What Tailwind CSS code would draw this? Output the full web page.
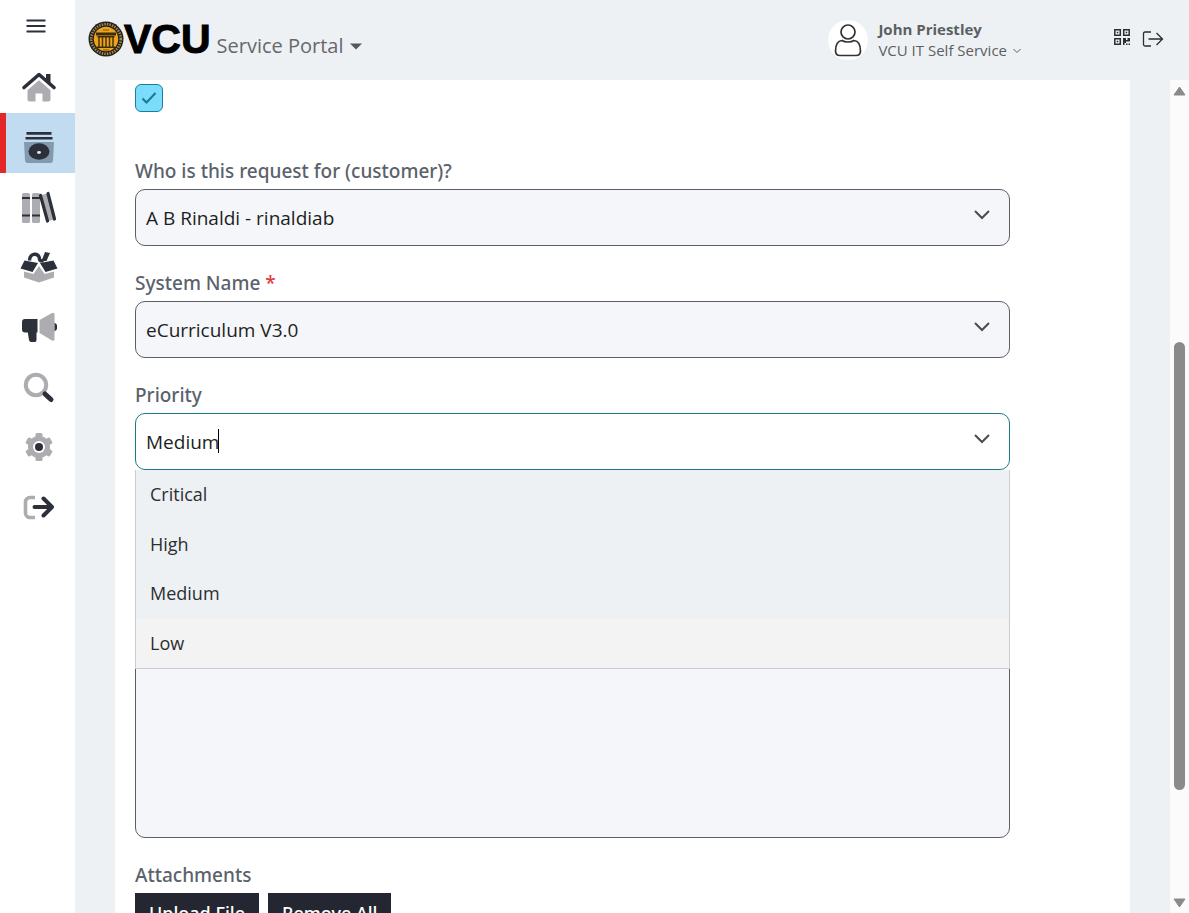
<!DOCTYPE html>
<html lang="en">
<head>
<meta charset="utf-8">
<meta name="viewport" content="width=device-width, initial-scale=1">
<title>VCU Service Portal</title>
<script src="https://cdn.jsdelivr.net/npm/@tailwindcss/browser@4"></script>
</head>
<body class="flex h-screen overflow-hidden bg-[#edf1f4] font-['Open_Sans','Noto_Sans',sans-serif] text-[#24262b]">

<nav aria-label="Main" class="flex w-[75px] shrink-0 flex-col bg-white">
  <button type="button" aria-label="Menu" class="flex h-[53px] items-center justify-center pr-[3px] pb-px">
    <svg width="20" height="14" viewBox="0 0 20 14" stroke="#2b303b" stroke-width="2"><path d="M.5 1.5h19M.5 7h19M.5 12.5h19"/></svg>
  </button>
  <a href="#" aria-label="Home" class="flex h-[60px] items-center justify-center pt-2 pl-[2px]">
    <svg width="36" height="36" viewBox="0 0 36 36"><path d="M18 9.500 6.500 19v11.500a2 2 0 0 0 2 2h6v-8h7v8h6a2 2 0 0 0 2-2V19z" fill="#adadb1"/><path d="m3 19.500 15-13 15 13" fill="none" stroke="#fff" stroke-width="7" stroke-linejoin="round"/><path d="M25 5h4.500v11.500L25 12z" fill="#2b303b"/><path d="m3 18.500 15-13 15 13" fill="none" stroke="#2b303b" stroke-width="3.600" stroke-linecap="round" stroke-linejoin="round"/></svg>
  </a>
  <a href="#" aria-label="Services" aria-current="page" class="flex h-[60px] items-center justify-center border-l-[6px] border-[#e22726] bg-[#c1dbf0] pt-2 pr-1">
    <svg width="32" height="36" viewBox="0 0 32 36"><path d="M3.500 3h25v2.700h-25zM2.500 8h27v2.500h-27z" fill="#2b303b"/><path d="M1 13h30l-1 18a3 3 0 0 1-3 3H5a3 3 0 0 1-3-3z" fill="#8499ad"/><ellipse cx="16" cy="22.500" rx="10.500" ry="8.200" fill="#2b303b"/><ellipse cx="16" cy="23.500" rx="2" ry="1.400" fill="#dbe8f2"/></svg>
  </a>
  <a href="#" aria-label="Knowledge base" class="flex h-[60px] items-center justify-center pt-[10px] pl-[2px]">
    <svg width="36" height="34" viewBox="0 0 36 34"><g fill="#adadb1"><rect x="1" y="2" width="8" height="30" rx="1.500"/><rect x="11" y="2" width="8" height="30" rx="1.500"/></g><path d="M1 6h8v2H1zM11 6h8v2h-8zM1 23.500h8v2H1zM11 23.500h8v2h-8z" fill="#2b303b"/><path d="m20.500 4 6-1.500 7 26-6 1.500z" fill="#adadb1"/><path d="m19.500 4.500 7 25.500M27 2.500 33.500 28" stroke="#2b303b" stroke-width="3.200" stroke-linecap="round"/></svg>
  </a>
  <a href="#" aria-label="My items" class="flex h-[60px] items-center justify-center pt-2 pl-[2px]">
    <svg width="38" height="34" viewBox="0 0 38 34"><path d="M4 21.500 13.500 24l5.500-8 5.500 8 9.500-2.500v6L19 32.500 4 27.500z" fill="#adadb1"/><path d="M4.500 10.500 18 13l-5.500 9L.5 18.500zM33.500 10.500 20 13l5.500 9 12-3.500z" fill="#2b303b"/><path d="M9.500 10.500c0-8 10-8 10-1.500 0 2 1.500 2 4 1.500" fill="none" stroke="#2b303b" stroke-width="3.500"/><path d="m25 2 5 1-3.500 8h-5z" fill="#2b303b"/></svg>
  </a>
  <a href="#" aria-label="News" class="flex h-[60px] items-center justify-center pt-[10px] pl-[2px]">
    <svg width="36" height="34" viewBox="0 0 36 34"><path d="M4 8h12.500v13.500h-1V29q0 2-1.500 2h-4q-1.500 0-2-2l-1.200-7.500H4a3 3 0 0 1-3-3V11a3 3 0 0 1 3-3z" fill="#2b303b"/><path d="M34 13c2 1 2 5 0 6z" stroke="#2b303b" stroke-width="1.500" fill="#2b303b"/><path d="M18.500 9 31 2q2.500-1 2.500 1.500v24.500q0 2.500-2.500 1.500L18.500 22z" fill="#adadb1"/></svg>
  </a>
  <a href="#" aria-label="Search" class="flex h-[60px] items-center justify-center pt-[10px] pl-[2px]">
    <svg width="32" height="32" viewBox="0 0 32 32" fill="none"><circle cx="13" cy="13" r="10.200" stroke="#adadb1" stroke-width="4"/><path d="m22 22 6 5.500" stroke="#2b303b" stroke-width="5" stroke-linecap="round"/></svg>
  </a>
  <a href="#" aria-label="Settings" class="flex h-[60px] items-center justify-center pt-2 pl-[2px]">
    <svg width="30" height="30" viewBox="0 0 30 30"><g fill="#adadb1"><circle cx="15" cy="15" r="11"/><rect x="11.500" y="1" width="7" height="28" rx="1.500"/><rect x="11.500" y="1" width="7" height="28" rx="1.500" transform="rotate(60 15 15)"/><rect x="11.500" y="1" width="7" height="28" rx="1.500" transform="rotate(120 15 15)"/></g><circle cx="15" cy="15" r="6" fill="#fff"/><circle cx="15" cy="15" r="4" fill="#2b303b"/></svg>
  </a>
  <a href="#" aria-label="Sign out" class="flex h-[60px] items-center justify-center pt-2 pl-[2px]">
    <svg width="32" height="26" viewBox="0 0 32 26" fill="none" stroke-linejoin="round"><path d="M12 3.500H7A4.500 4.500 0 0 0 2.500 8v11A4.500 4.500 0 0 0 7 23.500h5" stroke="#adadb1" stroke-width="3.600"/><path d="M11.500 13H29M20.500 4.500 29 13l-8.500 8.500" stroke="#2b303b" stroke-width="4" stroke-linecap="round"/></svg>
  </a>
</nav>

<div class="flex min-w-0 flex-1 flex-col">
  <header class="flex h-20 shrink-0 items-center pl-[13px] pr-[25px]">
    <div class="flex flex-1 items-center">
      <svg class="mb-[2px]" width="36" height="36" viewBox="0 0 36 36" aria-hidden="true"><circle cx="18" cy="18" r="17.500" fill="#24221c"/><circle cx="18" cy="18" r="14.800" fill="none" stroke="#a58c52" stroke-width="2.600" stroke-dasharray="1.400 1.200"/><circle cx="18" cy="18" r="12.200" fill="#eda41c"/><path d="M8 11.500h20v3H8zM9.500 15h17v1.500h-17zM9 25.500h18V27H9z" fill="#3b2b0c"/><path d="M11 16v10M14.500 16v10M18 16v10M21.500 16v10M25 16v10" stroke="#4a340b" stroke-width="1.500"/><path d="M15 9h6M15 29h6" stroke="#7a5710"/></svg>
      <span class="mb-[2px] font-['Liberation_Sans',Arial,sans-serif] text-[41px] leading-[42px] font-bold text-black [-webkit-text-stroke:1px_#000]">VCU</span>
      <button type="button" class="mt-3 ml-[6px] flex items-center gap-[6px] text-[20px] leading-7 text-[#66686c]">Service Portal
        <svg width="12" height="7" viewBox="0 0 12 7"><path d="M0 .5h12L6 6.500z" fill="#55575b"/></svg>
      </button>
    </div>
    <button type="button" class="mr-[93px] flex items-center gap-[10px] text-left text-[#5c5f63]">
      <span class="flex size-10 items-center justify-center rounded-full bg-white">
        <svg width="28" height="34" viewBox="0 0 28 34" fill="none" stroke="#303236" stroke-width="1.700"><circle cx="14" cy="9" r="7"/><path d="M8 17.500C4 18 1.500 22 1.500 28q0 4.500 4.500 4.500h16q4.500 0 4.500-4.500C26.500 22 24 18 20 17.500q-2 1.500-6 1.500t-6-1.500z"/></svg>
      </span>
      <span class="flex flex-col">
        <span class="text-[15px] leading-[21px] font-bold">John Priestley</span>
        <span class="flex items-center gap-[6px] text-[15px] leading-[21px]">VCU IT Self Service
          <svg width="8" height="6" viewBox="0 0 8 6" fill="none" stroke="#5c5f63"><path d="m.5 1 3.500 3.500L7.500 1"/></svg>
        </span>
      </span>
    </button>
    <button type="button" aria-label="QR code" class="mb-[6px]">
      <svg width="16" height="16" viewBox="0 0 16 16"><g fill="none" stroke="#2b2d31" stroke-width="1.500"><path d="M.8.800h5.500v5.500H.8zM9.700.800h5.500v5.500H9.700zM.8 9.700h5.500v5.500H.8z"/></g><path d="M2.800 2.800h1.500v1.500H2.800zM11.700 2.800h1.500v1.500h-1.500zM2.800 11.700h1.500v1.500H2.800zM9 9h3v2h1.500V9H16v3.500h-4V14h-1.500v2H9zM12 14.500h1.500V16H12zM14.500 14.500H16V16h-1.500z" fill="#2b2d31"/></svg>
    </button>
    <button type="button" aria-label="Log out" class="mb-[2px] ml-[12px]">
      <svg width="22" height="16" viewBox="0 0 22 16" fill="none" stroke="#2b2d31" stroke-width="1.300"><path d="M9 1H3Q1.500 1 1.500 2.500v11Q1.500 15 3 15h6M6.500 8H20.500M14.500 2l6 6-6 6"/></svg>
    </button>
  </header>

  <div class="flex min-h-0 flex-1">
    <main class="mx-10 min-w-0 flex-1 overflow-hidden bg-white pt-1 pr-[120px] pl-5">
      <form>
        <label class="relative flex size-7">
          <input type="checkbox" checked aria-label="Confirm" class="size-7 appearance-none rounded-[6px] border border-[#1d7f96] bg-[#7bdcfc]">
          <svg class="pointer-events-none absolute inset-0 m-auto" width="16" height="14" viewBox="0 0 16 14" fill="none" stroke="#177a94" stroke-width="2"><path d="m1.500 7.500 4 4L14.500 2"/></svg>
        </label>

        <div class="mt-[47px] flex flex-col gap-[25px]">
          <div>
            <label for="customer" class="mb-[6px] block font-['Noto_Sans',sans-serif] text-[19px] leading-6 font-medium text-[#5a626b]">Who is this request for (customer)?</label>
            <div class="relative">
              <select id="customer" class="block h-[57px] w-full appearance-none rounded-[10px] border border-[#5b6068] bg-[#f5f6f9] px-[10px] pt-[2px] text-[19px] text-[#1d1f23]"><option>A B Rinaldi - rinaldiab</option></select>
              <svg class="pointer-events-none absolute top-5 right-5" width="16" height="12" viewBox="0 0 16 12" fill="none" stroke="#4a4c50" stroke-width="2"><path d="m1 2 7 7 7-7"/></svg>
            </div>
          </div>

          <div>
            <label for="system" class="mb-[6px] block font-['Noto_Sans',sans-serif] text-[19px] leading-6 font-medium text-[#5a626b]">System Name <span class="text-[#e23b3b]">*</span></label>
            <div class="relative">
              <select id="system" required class="block h-[57px] w-full appearance-none rounded-[10px] border border-[#5b6068] bg-[#f5f6f9] px-[10px] pt-[2px] text-[19px] text-[#1d1f23]"><option>eCurriculum V3.0</option></select>
              <svg class="pointer-events-none absolute top-5 right-5" width="16" height="12" viewBox="0 0 16 12" fill="none" stroke="#4a4c50" stroke-width="2"><path d="m1 2 7 7 7-7"/></svg>
            </div>
          </div>

          <div>
            <label for="priority" class="mb-[6px] block font-['Noto_Sans',sans-serif] text-[19px] leading-6 font-medium text-[#5a626b]">Priority</label>
            <div class="relative">
              <input id="priority" type="text" role="combobox" aria-expanded="true" aria-controls="priority-list" value="Medium" class="block h-[57px] w-full rounded-[10px] border border-[#1a7d86] bg-white px-[10px] text-[19px] text-[#1d1f23]">
              <span class="absolute top-4 left-[83px] h-6 w-px bg-black"></span>
              <svg class="pointer-events-none absolute top-5 right-5" width="16" height="12" viewBox="0 0 16 12" fill="none" stroke="#4a4c50" stroke-width="2"><path d="m1 2 7 7 7-7"/></svg>
              <ul id="priority-list" role="listbox" aria-label="Priority" class="absolute inset-x-0 top-full z-10 flex h-[199px] flex-col border-x border-b border-[#c9ccd1] bg-[#edf1f4] text-[18px] text-[#2c2e32]">
                <li role="option" class="flex flex-1 items-center px-[14px]">Critical</li>
                <li role="option" class="flex flex-1 items-center px-[14px]">High</li>
                <li role="option" aria-selected="true" class="flex flex-1 items-center px-[14px]">Medium</li>
                <li role="option" class="flex flex-1 items-center bg-[#f3f3f3] px-[14px]">Low</li>
              </ul>
            </div>
          </div>

          <textarea aria-label="Description" class="mt-[30px] block h-[313px] w-full resize-none rounded-[10px] border border-[#5b6068] bg-[#f5f6f9] p-[10px] text-[19px]"></textarea>

          <div role="group" aria-labelledby="attachments">
            <p id="attachments" class="mb-[6px] font-['Noto_Sans',sans-serif] text-[19px] leading-6 font-medium text-[#5a626b]">Attachments</p>
            <div class="flex gap-[9px]">
              <button type="button" class="h-10 bg-[#242731] px-[14px] font-['Noto_Sans',sans-serif] text-[18px] leading-6 font-medium text-white">Upload File</button>
              <button type="button" class="h-10 bg-[#242731] px-[14px] font-['Noto_Sans',sans-serif] text-[18px] leading-6 font-medium text-white">Remove All</button>
            </div>
          </div>
        </div>
      </form>
    </main>

    <div aria-hidden="true" class="flex w-[19px] shrink-0 flex-col items-center bg-[#fcfbfc] pt-[6px] pb-[5px]">
      <svg width="13" height="10" viewBox="0 0 13 10"><path d="M6.500 1 12 9H1z" fill="#8b8a8b" stroke="#8b8a8b" stroke-linejoin="round"/></svg>
      <div class="flex w-full flex-1 flex-col items-center">
        <div class="flex-[246]"></div>
        <div class="w-[11px] flex-[448] rounded-full bg-[#8b8a8b]"></div>
        <div class="flex-[108]"></div>
      </div>
      <svg width="13" height="10" viewBox="0 0 13 10"><path d="M6.500 9 12 1H1z" fill="#8b8a8b" stroke="#8b8a8b" stroke-linejoin="round"/></svg>
    </div>
  </div>
</div>
</body>
</html>
